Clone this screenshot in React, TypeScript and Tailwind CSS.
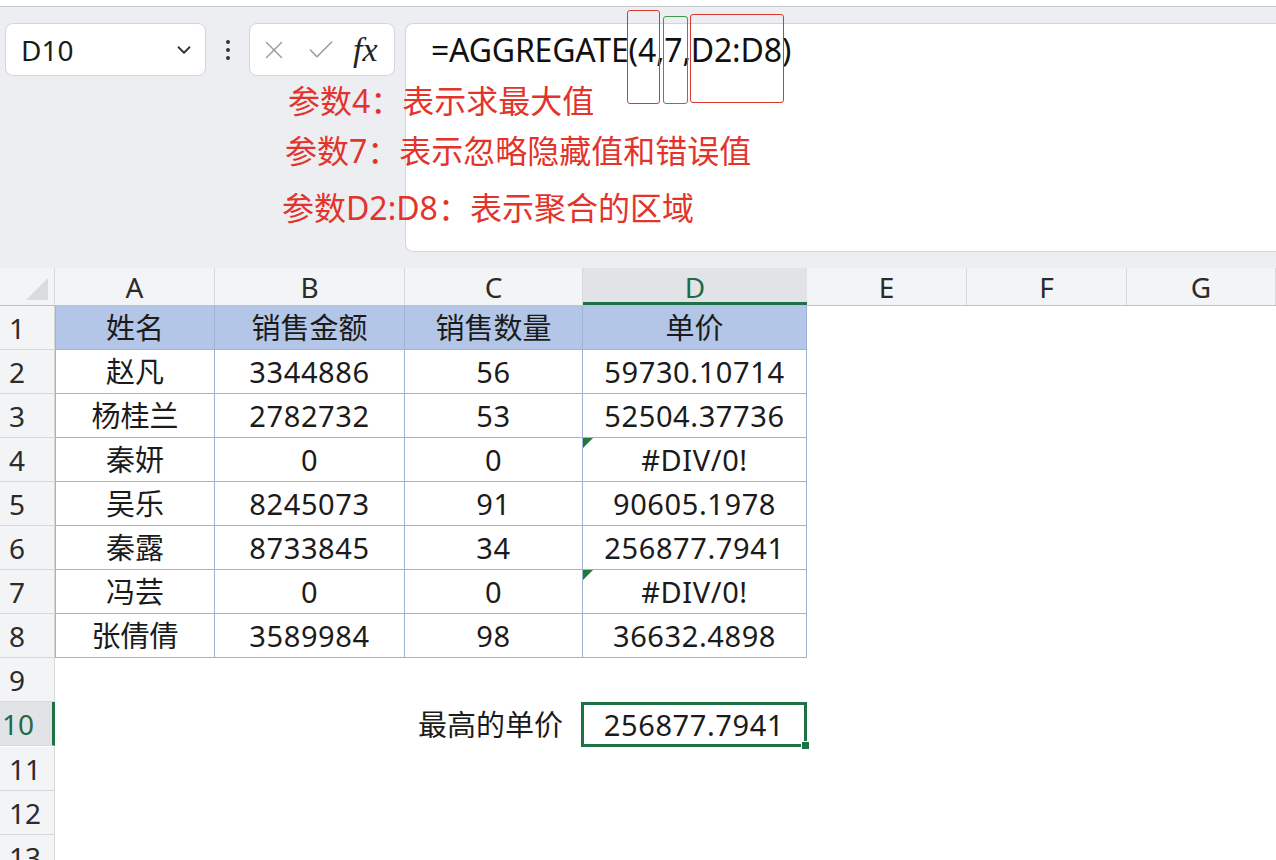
import { ChevronDown, X, Check } from "lucide-react";

const font = { fontFamily: '"Noto Sans", "Noto Sans CJK SC", sans-serif' };

const rows = [
  ["赵凡", "3344886", "56", "59730.10714"],
  ["杨桂兰", "2782732", "53", "52504.37736"],
  ["秦妍", "0", "0", "#DIV/0!"],
  ["吴乐", "8245073", "91", "90605.1978"],
  ["秦露", "8733845", "34", "256877.7941"],
  ["冯芸", "0", "0", "#DIV/0!"],
  ["张倩倩", "3589984", "98", "36632.4898"],
];

const cols = ["A", "B", "C", "D", "E", "F", "G"];
const gridCols = "grid grid-cols-[55px_160px_190px_178px_224px_160px_160px_1fr]";

const cell = "h-[44px] flex items-center justify-center text-[29px] tracking-[0.6px] leading-none text-[#1b1b1b] border-[#9fb3d6]";
const rowHead = "h-[44px] flex items-center pl-[9px] text-[28px] leading-none text-[#2b2b2b] bg-[#f3f4f6] border-r border-b border-[#d6d8db]";

const FormulaBar = () => (
  <div className="relative h-[261px] bg-[#eceef2] pt-4 pl-[5px]">
    <div className="flex items-start">
      <div className="w-[201px] h-[53px] bg-white border border-[#d3d5d9] rounded-lg flex items-center justify-between pl-[15px] pr-[10px]">
        <span className="text-[28px] text-[#1b1b1b]">D10</span>
        <ChevronDown size={22} strokeWidth={2} className="text-[#333]" />
      </div>
      <div className="w-[43px] h-[53px] flex flex-col items-center justify-center gap-[4px]">
        <span className="w-[4px] h-[4px] rounded-full bg-[#333]" />
        <span className="w-[4px] h-[4px] rounded-full bg-[#333]" />
        <span className="w-[4px] h-[4px] rounded-full bg-[#333]" />
      </div>
      <div className="w-[146px] h-[53px] bg-white border border-[#d3d5d9] rounded-lg flex items-center pl-[9px] gap-[16px]">
        <X size={30} strokeWidth={1.1} className="text-[#9a9a9a]" />
        <Check size={32} strokeWidth={1.1} className="text-[#9a9a9a]" />
        <span className="text-[34px] italic text-[#222] leading-none" style={{ fontFamily: '"Liberation Serif", serif' }}>
          fx
        </span>
      </div>
      <div className="ml-[10px] flex-1 h-[229px] bg-white border border-r-0 border-[#d3d5d9] rounded-l-lg pl-[25px] pt-[2px]">
        <span className="text-[32px] text-[#111] tracking-[-0.2px]">=AGGREGATE(4,7,D2:D8)</span>
      </div>
    </div>

    {/* annotation boxes */}
    <div className="absolute left-[627px] top-[3px] w-[33px] h-[94px] border-[1.5px] border-[#d8392f] rounded-[3px]" />
    <div className="absolute left-[663px] top-[9px] w-[25px] h-[88px] border-[1.5px] border-[#3c9a4c] rounded-[3px]" />
    <div className="absolute left-[690px] top-[7px] w-[94px] h-[89px] border-[1.5px] border-[#d8392f] rounded-[3px]" />

    <div className="absolute left-[288px] top-[78px] text-[32px] text-[#e3342b] leading-none whitespace-nowrap">参数4：表示求最大值</div>
    <div className="absolute left-[285px] top-[128px] text-[32px] text-[#e3342b] leading-none whitespace-nowrap">参数7：表示忽略隐藏值和错误值</div>
    <div className="absolute left-[282px] top-[185px] text-[32px] text-[#e3342b] leading-none whitespace-nowrap">参数D2:D8：表示聚合的区域</div>
  </div>
);

const Sheet = () => (
  <div className="bg-white">
    {/* column headers */}
    <div className={`${gridCols} h-[38px] bg-[#f3f4f6] border-b border-[#bfc2c6]`}>
      <div className="relative border-r border-[#d6d8db]">
        <div className="absolute right-[6px] bottom-[5px] w-0 h-0 border-l-[22px] border-l-transparent border-b-[22px] border-b-[#d9dbde]" />
      </div>
      {cols.map((c) => (
        <div
          key={c}
          className={
            c === "D"
              ? "flex items-center justify-center text-[28px] leading-none text-[#1e6b45] bg-[#e1e3e6] shadow-[inset_0_-3px_0_#1e7145]"
              : "flex items-center justify-center text-[28px] leading-none text-[#2b2b2b] border-r border-[#d6d8db]"
          }
        >
          {c}
        </div>
      ))}
    </div>

    <div className={gridCols}>
      {/* row 1 header */}
      <div className={rowHead}>1</div>
      {["姓名", "销售金额", "销售数量", "单价"].map((h, i) => (
        <div key={h} className={`${cell} tracking-normal bg-[#b4c6e7] border-r border-b ${i === 0 ? "border-l" : ""}`}>
          {h}
        </div>
      ))}
      <div className="col-span-3" />

      {rows.map((r, ri) => (
        <div key={ri} className="contents">
          <div className={rowHead}>{ri + 2}</div>
          {r.map((v, ci) => (
            <div key={ci} className={`${cell} relative border-r border-b ${ci === 0 ? "border-l tracking-normal" : ""}`}>
              {ci === 3 && v === "#DIV/0!" && (
                <div className="absolute left-0 top-0 w-0 h-0 border-t-[10px] border-t-[#1e7a3c] border-r-[10px] border-r-transparent" />
              )}
              {v}
            </div>
          ))}
          <div className="col-span-3" />
        </div>
      ))}

      {/* row 9 */}
      <div className={rowHead}>9</div>
      <div className="col-span-7" />

      {/* row 10 */}
      <div className="h-[44px] flex items-center pl-[2px] text-[28px] leading-none text-[#1e6b45] bg-[#e1e3e6] border-r-[3px] border-r-[#1e7145] border-b border-[#d6d8db]">10</div>
      <div />
      <div />
      <div className="h-[44px] flex items-center justify-end pr-[20px] text-[29px] leading-none text-[#1b1b1b]">最高的单价</div>
      <div className="relative z-10 h-[45px] -ml-[2px] flex items-center justify-center text-[29px] tracking-[0.6px] leading-none text-[#1b1b1b] border-[3px] border-[#1e7145]">
        256877.7941
        <div className="absolute -right-[6px] -bottom-[6px] w-[9px] h-[9px] bg-[#1e7145] border border-white" />
      </div>
      <div className="col-span-3" />

      {[11, 12, 13].map((n) => (
        <div key={n} className="contents">
          <div className={rowHead}>{n}</div>
          <div className="col-span-7" />
        </div>
      ))}
    </div>
  </div>
);

export default function App() {
  return (
    <div className="w-[1276px] h-[860px] overflow-hidden bg-white" style={font}>
      <div className="h-[7px] bg-white border-b border-[#c4c7cb] shadow-[0_1px_2px_rgba(0,0,0,0.08)]" />
      <FormulaBar />
      <Sheet />
    </div>
  );
}
